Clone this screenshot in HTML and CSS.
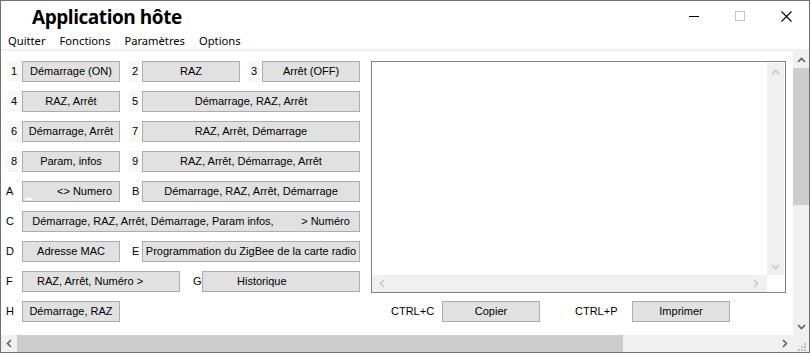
FILE: index.html
```html
<!DOCTYPE html>
<html lang="fr">
<head>
<meta charset="utf-8">
<title>Application hôte</title>
<link rel="stylesheet" href="styles.css">
</head>
<body>
<div class="window">
  <div class="titlebar">
    <div class="title">Application hôte</div>
    <div class="caption">
      <span class="cbtn"><svg width="10" height="10" viewBox="0 0 10 10"><line x1="0" y1="5.5" x2="10" y2="5.5" stroke="#000" stroke-width="1"/></svg></span>
      <span class="cbtn"><svg width="10" height="10" viewBox="0 0 10 10"><rect x="0.5" y="0.5" width="9" height="9" fill="none" stroke="#c4c4c4" stroke-width="1"/></svg></span>
      <span class="cbtn"><svg width="11" height="11" viewBox="0 0 11 11"><path d="M0.5 0.5 L10.5 10.5 M10.5 0.5 L0.5 10.5" stroke="#000" stroke-width="1.1" fill="none"/></svg></span>
    </div>
  </div>
  <div class="menubar">
    <span class="mi">Quitter</span>
    <span class="mi">Fonctions</span>
    <span class="mi">Paramètres</span>
    <span class="mi">Options</span>
  </div>
  <div class="client">
    <div class="viewport">
      <div class="layout">
        <div class="row">
          <span class="lbl l1 digit">1</span><span class="btn w98">Démarrage (ON)</span>
          <span class="lbl l2 digit">2</span><span class="btn w98">RAZ</span>
          <span class="lbl l3 digit">3</span><span class="btn w98">Arrêt (OFF)</span>
        </div>
        <div class="row">
          <span class="lbl l1 digit">4</span><span class="btn w98">RAZ, Arrêt</span>
          <span class="lbl l2 digit">5</span><span class="btn w218">Démarrage, RAZ, Arrêt</span>
        </div>
        <div class="row">
          <span class="lbl l1 digit">6</span><span class="btn w98">Démarrage, Arrêt</span>
          <span class="lbl l2 digit">7</span><span class="btn w218">RAZ, Arrêt, Démarrage</span>
        </div>
        <div class="row">
          <span class="lbl l1 digit">8</span><span class="btn w98">Param, infos</span>
          <span class="lbl l2 digit">9</span><span class="btn w218">RAZ, Arrêt, Démarrage, Arrêt</span>
        </div>
        <div class="row">
          <span class="lbl l1">A</span><span class="btn w98 num">&lt;&gt; Numero<span class="mark"></span></span>
          <span class="lbl l2">B</span><span class="btn w218">Démarrage, RAZ, Arrêt, Démarrage</span>
        </div>
        <div class="row">
          <span class="lbl l1">C</span><span class="btn w338 pre">Démarrage, RAZ, Arrêt, Démarrage, Param infos,         &gt; Numéro</span>
        </div>
        <div class="row">
          <span class="lbl l1">D</span><span class="btn w98">Adresse MAC</span>
          <span class="lbl l2">E</span><span class="btn w218">Programmation du ZigBee de la carte radio</span>
        </div>
        <div class="row">
          <span class="lbl l1">F</span><span class="btn w158 left-f">RAZ, Arrêt, Numéro &gt;</span>
          <span class="lbl lg">G</span><span class="btn w158 left-g">Historique</span>
        </div>
        <div class="row">
          <span class="lbl l1">H</span><span class="btn w98">Démarrage, RAZ</span>
        </div>

        <div class="textbox">
          <div class="tb-area"></div>
          <div class="tb-vsb">
            <svg width="9" height="6" viewBox="0 0 9 6"><polyline points="1,5 4.5,1.5 8,5" fill="none" stroke="#c6c6c6" stroke-width="1.6"/></svg>
            <svg width="9" height="6" viewBox="0 0 9 6"><polyline points="1,1 4.5,4.5 8,1" fill="none" stroke="#c6c6c6" stroke-width="1.6"/></svg>
          </div>
          <div class="tb-hsb">
            <svg width="6" height="9" viewBox="0 0 6 9"><polyline points="5,1 1.5,4.5 5,8" fill="none" stroke="#c6c6c6" stroke-width="1.6"/></svg>
            <svg width="6" height="9" viewBox="0 0 6 9"><polyline points="1,1 4.5,4.5 1,8" fill="none" stroke="#c6c6c6" stroke-width="1.6"/></svg>
          </div>
          <div class="tb-corner"></div>
        </div>

        <div class="actions">
          <span class="klbl kc">CTRL+C</span><span class="btn w98">Copier</span>
          <span class="klbl kp">CTRL+P</span><span class="btn w98">Imprimer</span>
        </div>
      </div>
    </div>
    <div class="vsb">
      <div class="arrow">
        <svg width="9" height="6" viewBox="0 0 9 6"><polyline points="1,5 4.5,1.5 8,5" fill="none" stroke="#606060" stroke-width="1.6"/></svg>
      </div>
      <div class="vtrack"><div class="vthumb"></div></div>
      <div class="arrow">
        <svg width="9" height="6" viewBox="0 0 9 6"><polyline points="1,1 4.5,4.5 8,1" fill="none" stroke="#606060" stroke-width="1.6"/></svg>
      </div>
    </div>
    <div class="hsb">
      <div class="harrow">
        <svg width="6" height="9" viewBox="0 0 6 9"><polyline points="5,1 1.5,4.5 5,8" fill="none" stroke="#606060" stroke-width="1.6"/></svg>
      </div>
      <div class="htrack"><div class="hthumb"></div></div>
      <div class="harrow">
        <svg width="6" height="9" viewBox="0 0 6 9"><polyline points="1,1 4.5,4.5 1,8" fill="none" stroke="#606060" stroke-width="1.6"/></svg>
      </div>
    </div>
    <div class="corner">
      <svg width="16" height="17" viewBox="0 0 16 17">
        <rect x="11" y="8" width="2" height="2" fill="#bcbcbc"/>
        <rect x="8" y="11" width="2" height="2" fill="#bcbcbc"/>
        <rect x="11" y="11" width="2" height="2" fill="#bcbcbc"/>
        <rect x="5" y="14" width="2" height="2" fill="#bcbcbc"/>
        <rect x="8" y="14" width="2" height="2" fill="#bcbcbc"/>
        <rect x="11" y="14" width="2" height="2" fill="#bcbcbc"/>
      </svg>
    </div>
  </div>
</div>
</body>
</html>
```

FILE: styles.css
```css
* { box-sizing: border-box; }

html, body {
  margin: 0;
  padding: 0;
  background: #ffffff;
}

.window {
  width: 810px;
  height: 353px;
  border: 1px solid #717171;
  background: #ffffff;
  display: flex;
  flex-direction: column;
  overflow: hidden;
}

.titlebar {
  height: 31px;
  display: flex;
  align-items: flex-start;
  justify-content: space-between;
}

.title {
  font-family: "Open Sans", "Noto Sans", sans-serif;
  font-weight: 700;
  font-size: 19px;
  line-height: 26px;
  padding-left: 31px;
  padding-top: 3px;
  color: #000;
  letter-spacing: -0.45px;
}

.caption {
  display: flex;
}

.cbtn {
  width: 46px;
  height: 30px;
  display: flex;
  align-items: center;
  justify-content: center;
}

.menubar {
  display: flex;
  gap: 14px;
  padding-left: 7px;
  align-items: center;
  font-family: "Noto Sans", "Open Sans", sans-serif;
  font-size: 11.2px;
  color: #000;
  border-bottom: 2px solid #f0f0f0;
  height: 19px;
}

.mi {
  line-height: 16px;
}

.client {
  flex: 1;
  display: grid;
  grid-template-columns: 1fr 16px;
  grid-template-rows: 1fr 17px;
  min-height: 0;
}

.viewport {
  overflow: hidden;
  background: #fff;
}

.layout {
  display: grid;
  grid-template-columns: 360px 415px;
  grid-template-rows: repeat(9, 21px);
  column-gap: 10px;
  row-gap: 9px;
  padding-top: 10px;
  font-family: "Liberation Sans", Arial, sans-serif;
  font-size: 11px;
  color: #000;
}

.row {
  grid-column: 1;
  display: flex;
  align-items: center;
  height: 21px;
}

.lbl {
  height: 21px;
  line-height: 21px;
  flex: none;
}

.l1 { width: 21px; padding-left: 5px; }
.l1.digit { padding-left: 10px; }
.l2 { width: 22px; padding-left: 12px; }
.l3 { width: 22px; padding-left: 11px; }
.lg { width: 22px; padding-left: 13px; }

.digit {
  background: linear-gradient(to right, transparent 6px, #f7f7f7 6px);
}
.l2.digit, .l3.digit {
  background: linear-gradient(to right, transparent 9px, #f7f7f7 9px, #f7f7f7 20px, transparent 20px);
}

.btn {
  position: relative;
  flex: none;
  height: 21px;
  line-height: 19px;
  border: 1px solid #adadad;
  background: #e1e1e1;
  text-align: center;
  white-space: nowrap;
  overflow: hidden;
}

.w98 { width: 98px; }
.w158 { width: 158px; }
.w218 { width: 218px; }
.w338 { width: 338px; }

.pre { white-space: pre; }

.num { text-align: left; padding-left: 34px; }
.left-f { text-align: left; padding-left: 14px; }
.left-g { text-align: left; padding-left: 34px; }

.mark {
  position: absolute;
  left: 2px;
  bottom: 1px;
  width: 7px;
  height: 2px;
  background: #ffffff;
}

.textbox {
  grid-column: 2;
  grid-row: 1 / 9;
  height: 232px;
  border: 1px solid #828282;
  padding: 1px 1px 0 0;
  display: grid;
  grid-template-columns: 1fr 17px;
  grid-template-rows: 1fr 17px;
  background: #fff;
}

.tb-area { background: #fff; }

.tb-vsb {
  background: #f0f0f0;
  display: flex;
  flex-direction: column;
  justify-content: space-between;
  align-items: center;
  padding: 6px 0 5px;
}

.tb-hsb {
  background: #f0f0f0;
  display: flex;
  justify-content: space-between;
  align-items: center;
  padding: 0 8px 0 7px;
}

.tb-corner { background: #fff; }

.actions {
  grid-column: 2;
  grid-row: 9;
  display: flex;
  align-items: center;
}

.klbl {
  flex: none;
  line-height: 21px;
}

.kc { width: 51px; margin-left: 20px; }
.kp { width: 57px; margin-left: 35px; }

.vsb {
  grid-column: 2;
  grid-row: 1;
  background: #f0f0f0;
  display: flex;
  flex-direction: column;
}

.arrow {
  height: 17px;
  display: flex;
  align-items: center;
  justify-content: center;
  flex: none;
}

.vtrack {
  flex: 1;
}

.vthumb {
  height: 137px;
  background: #cdcdcd;
}

.hsb {
  grid-column: 1;
  grid-row: 2;
  background: #f0f0f0;
  display: flex;
}

.harrow {
  width: 16px;
  display: flex;
  align-items: center;
  justify-content: center;
  flex: none;
}

.htrack {
  flex: 1;
}

.hthumb {
  width: 606px;
  height: 17px;
  background: #cdcdcd;
}

.corner {
  grid-column: 2;
  grid-row: 2;
  background: #f0f0f0;
}
```
